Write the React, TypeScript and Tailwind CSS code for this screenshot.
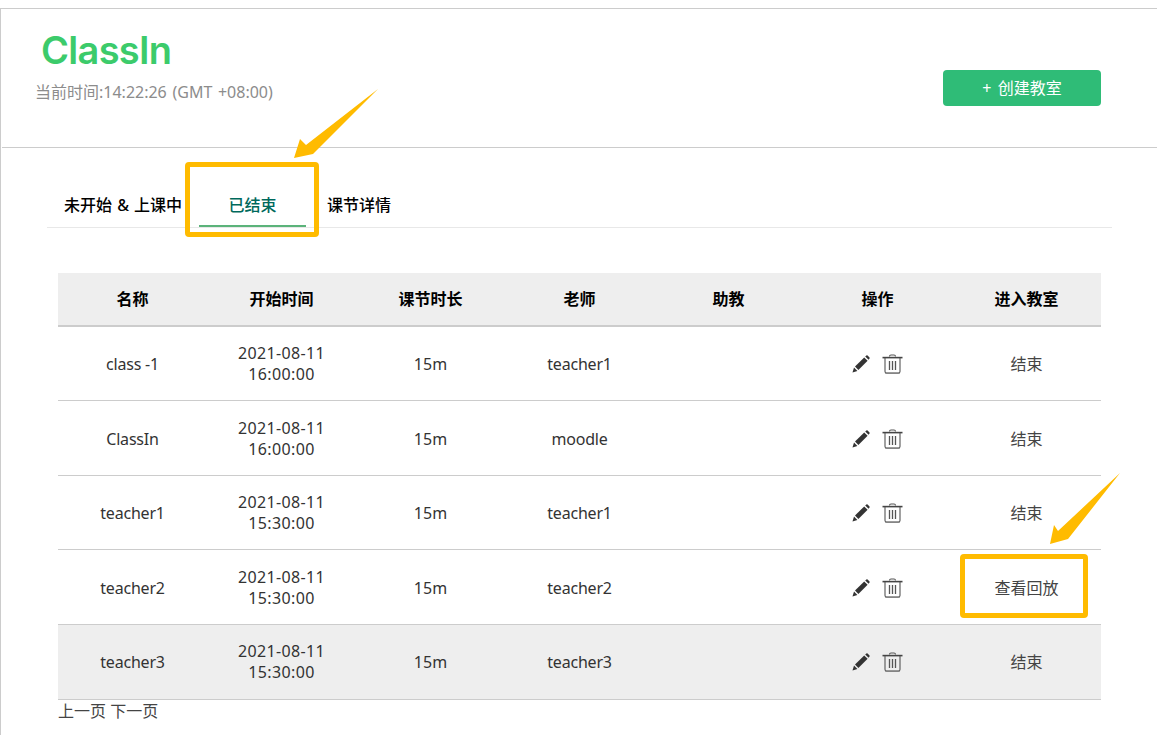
const rows = [
  { name: "class -1", date: "2021-08-11", time: "16:00:00", teacher: "teacher1", action: "结束", h: "h-[74.5px]" },
  { name: "ClassIn", date: "2021-08-11", time: "16:00:00", teacher: "moodle", action: "结束", h: "h-[74.5px]" },
  { name: "teacher1", date: "2021-08-11", time: "15:30:00", teacher: "teacher1", action: "结束", h: "h-[74.5px]" },
  { name: "teacher2", date: "2021-08-11", time: "15:30:00", teacher: "teacher2", action: "查看回放", h: "h-[74.5px]" },
  { name: "teacher3", date: "2021-08-11", time: "15:30:00", teacher: "teacher3", action: "结束", shaded: true, h: "h-[75px]" },
];
const heads = ["名称", "开始时间", "课节时长", "老师", "助教", "操作", "进入教室"];

function Pencil() {
  return (
    <svg width="20" height="20" viewBox="0 0 20 20" fill="#333">
      <path d="M1.5 18.5 L3 13.6 L6.4 17 Z" />
      <path d="M4 12.6 L13.2 3.4 L16.6 6.8 L7.4 16 Z" />
      <path d="M14.2 2.4 L15.4 1.4 Q16 1 16.6 1.5 L18.5 3.4 Q19 4 18.5 4.6 L17.6 5.8 Z" />
    </svg>
  );
}

function Trash() {
  return (
    <svg width="21" height="20" viewBox="0 0 21 20" fill="none" stroke="#555" strokeWidth="1.1">
      <path d="M7.5 2.6 Q7.5 1 9 1 H12 Q13.5 1 13.5 2.6" />
      <path d="M0.5 3.6 H20.5" strokeWidth="1.6" stroke="#444" />
      <path d="M3 4 V17.4 Q3 19.1 4.8 19.1 H16.2 Q18 19.1 18 17.4 V4" />
      <path d="M3.4 19.2 H17.6" strokeWidth="1.2" stroke="#888" />
      <path d="M7.5 7 V16 M10.5 7 V16 M13.5 7 V16" strokeWidth="1.3" />
    </svg>
  );
}

export default function App() {
  return (
    <div className="relative h-[735px] w-[1157px] overflow-hidden bg-white pt-2 font-['Noto_Sans','Noto_Sans_CJK_SC',sans-serif] text-[16px] text-[#333]">
      <div className="h-full border-t border-l border-[#cccccc] pl-px">
        <header className="flex h-[139px] justify-between border-b border-[#cccccc] pr-[56px]">
          <div className="pl-[33px] pt-[14px]">
            <div className="pl-[6px] font-['Inter',sans-serif] text-[38px] leading-[54px] font-semibold tracking-[-0.7px] text-[#3ccb6b]">
              ClassIn
            </div>
            <div className="mt-[4px] text-[16px] leading-[22px] [word-spacing:1.5px] text-[#8c8c8c]">当前时间:14:22:26 (GMT +08:00)</div>
          </div>
          <button className="mt-[61px] h-9 w-[158px] rounded bg-[#2fbc77] text-[16px] [word-spacing:2px] text-white">+ 创建教室</button>
        </header>

        <nav className="ml-[45px] flex h-[80px] w-[1065px] items-end border-b border-[#e8e8e8] text-[16px] font-medium text-black">
          <div className="flex h-[40px] w-[152px] items-start pt-[6px] pl-[17px] whitespace-nowrap [word-spacing:1px]">未开始 &amp; 上课中</div>
          <div className="flex h-[40px] w-[107px] items-start justify-center border-b-2 border-[#5bb37a] pt-[6px] text-[#00695c]">已结束</div>
          <div className="flex h-[40px] pl-[21px] items-start pt-[6px]">课节详情</div>
        </nav>

        <main className="ml-[56px] w-[1043px] pt-[45px]">
          <table className="w-full table-fixed border-collapse text-center">
            <thead>
              <tr className="h-[53px] border-b-2 border-[#cccccc] bg-[#eeeeee] text-black">
                {heads.map((h) => (
                  <th key={h} className="font-semibold">{h}</th>
                ))}
              </tr>
            </thead>
            <tbody>
              {rows.map((r) => (
                <tr key={r.name} className={`${r.h} border-b border-[#cccccc] ${r.shaded ? "bg-[#eeeeee]" : ""}`}>
                  <td className="pt-[1.6px] tracking-[-0.2px]">{r.name}</td>
                  <td className="pt-[1.6px] leading-[21px] tracking-[0.35px]">{r.date}<br />{r.time}</td>
                  <td className="pt-[1.6px]">15m</td>
                  <td className="pt-[1.6px] tracking-[-0.2px]">{r.teacher}</td>
                  <td></td>
                  <td className="pt-[1.6px]">
                    <div className="flex items-center justify-center gap-[11px] pr-px">
                      <Pencil />
                      <Trash />
                    </div>
                  </td>
                  <td className="pt-[1.6px] text-[#444]">{r.action}</td>
                </tr>
              ))}
            </tbody>
          </table>
          <div className="text-[16px] leading-[22px] text-[#444]">上一页 下一页</div>
        </main>
      </div>

      {/* annotations */}
      <div className="absolute left-[185px] top-[162px] h-[75px] w-[134px] rounded-[4px] border-[5px] border-[#ffbb00]" />
      <div className="absolute left-[960px] top-[554px] h-[64px] w-[128px] rounded-[4px] border-[5px] border-[#ffbb00]" />
      <svg className="absolute left-[290px] top-[85px]" width="92" height="76" viewBox="0 0 92 76" fill="#ffbb00">
        <path d="M88 4 L23 69 L4 73 L10 54 L16 60 Z" />
      </svg>
      <svg className="absolute left-[1046px] top-[470px]" width="76" height="76" viewBox="0 0 76 76" fill="#ffbb00">
        <path d="M74 3 L22 69 L4 74 L8 55 L12 61 Z" />
      </svg>
    </div>
  );
}
